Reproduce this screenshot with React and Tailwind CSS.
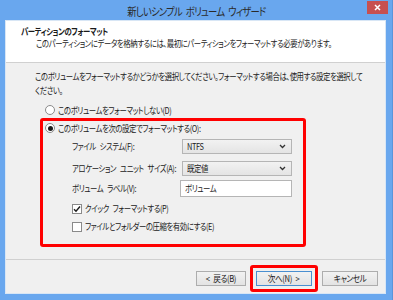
import React from "react";

const F = { fontFamily: '"Noto Sans CJK JP", "Noto Sans", sans-serif' };

function T({ children, className = "" }) {
  return (
    <span className={"inline-block origin-left scale-x-[0.82] whitespace-nowrap " + className}>
      {children}
    </span>
  );
}

function Radio({ checked }) {
  return (
    <span className="w-[10px] h-[10px] rounded-full border border-[#8a8a8a] bg-white flex items-center justify-center shrink-0">
      {checked && <span className="w-[5px] h-[5px] rounded-full bg-[#1a1a1a]" />}
    </span>
  );
}

function Check({ checked }) {
  return (
    <span className="w-[10px] h-[10px] border border-[#8a8a8a] bg-white flex items-center justify-center shrink-0">
      {checked && (
        <svg width="8" height="8" viewBox="0 0 8 8">
          <path d="M1 4.2 L3 6.2 L7 1.5" fill="none" stroke="#1a1a1a" strokeWidth="1.4" />
        </svg>
      )}
    </span>
  );
}

function Select({ value }) {
  return (
    <div className="w-[110px] h-[15px] border border-[#b5b5b5] bg-gradient-to-b from-[#f2f2f2] to-[#e4e4e4] flex items-center justify-between pl-[4px] pr-[5px]">
      <T className="text-[9px] leading-none text-[#1a1a1a]">{value}</T>
      <svg width="7" height="5" viewBox="0 0 7 5">
        <path d="M1 1 L3.5 3.5 L6 1" fill="none" stroke="#333" strokeWidth="1.3" />
      </svg>
    </div>
  );
}

function Btn({ children, def, w = "w-[56px]" }) {
  return (
    <div
      className={
        "h-[15px] " + w + " flex items-center justify-center text-[9px] leading-none text-[#1a1a1a] bg-gradient-to-b from-[#f2f2f2] to-[#e3e3e3] border " +
        (def ? "border-[#4a8fd0]" : "border-[#adadad]")
      }
    >
      <span className="inline-block scale-x-[0.85] whitespace-nowrap">{children}</span>
    </div>
  );
}

export default function App() {
  return (
    <div
      style={F}
      className="w-[393px] h-[300px] bg-[#69a7ee] flex flex-col overflow-hidden [font-feature-settings:'palt'] tracking-[-0.5px] [word-spacing:3px] border-r border-[#5a95da]"
    >
      {/* Title bar */}
      <div className="relative h-[20px] shrink-0 flex items-center justify-center">
        <span className="inline-block scale-x-[0.85] whitespace-nowrap text-[11px] tracking-[-0.9px] text-[#2a2a2a] leading-none pt-[2px]">
          新しいシンプル ボリューム ウィザード
        </span>
        <div className="absolute right-[4px] top-[1px] w-[21px] h-[13px] bg-[#c75050] flex items-center justify-center">
          <svg width="7" height="7" viewBox="0 0 7 7">
            <path d="M1 1 L6 6 M6 1 L1 6" stroke="#fff" strokeWidth="1.5" />
          </svg>
        </div>
      </div>

      {/* Client area */}
      <div className="ml-[5px] mr-[6px] h-[274px] shrink-0 border border-[#d8e6f5] bg-[#f0f0f0] flex flex-col">
        {/* Header */}
        <div className="h-[42px] shrink-0 bg-white border-b border-[#d0d0d0] pl-[15px] pt-[5px] flex flex-col items-start">
          <T className="text-[9px] leading-[12px] font-bold text-[#1a1a1a]">
            パーティションのフォーマット
          </T>
          <T className="text-[9px] leading-[12px] text-[#1a1a1a] ml-[15px]">
            このパーティションにデータを格納するには、最初にパーティションをフォーマットする必要があります。
          </T>
        </div>

        {/* Body */}
        <div className="h-[196px] shrink-0 flex flex-col items-start text-[9px] text-[#1a1a1a]">
          <div className="pl-[29px] pt-[7px] leading-[14px] flex flex-col items-start">
            <T>このボリュームをフォーマットするかどうかを選択してください。フォーマットする場合は、使用する設定を選択して</T>
            <T>ください。</T>
          </div>

          <div className="ml-[39px] mt-[6px] h-[12px] flex items-center gap-[3px] leading-none">
            <Radio />
            <T>このボリュームをフォーマットしない(D)</T>
          </div>

          <div className="ml-[34px] mt-[2px] w-[266px] h-[129px] border-[3px] border-[#ff0000] rounded-[3px] flex flex-col">
            <div className="ml-[2px] mt-[1px] h-[12px] flex items-center gap-[3px] leading-none">
              <Radio checked />
              <T>このボリュームを次の設定でフォーマットする(O):</T>
            </div>

            <div className="mt-[5px] ml-[29px] flex flex-col gap-[7px]">
              <div className="flex items-center">
                <span className="w-[110px] leading-none"><T>ファイル システム(F):</T></span>
                <Select value="NTFS" />
              </div>
              <div className="flex items-center">
                <span className="w-[110px] leading-none"><T>アロケーション ユニット サイズ(A):</T></span>
                <Select value="既定値" />
              </div>
              <div className="flex items-center -mt-[3px]">
                <span className="w-[108px] leading-none"><T>ボリューム ラベル(V):</T></span>
                <div className="w-[112px] h-[17px] border border-[#b5b5b5] bg-white flex items-center pl-[4px] text-[9px] leading-none">
                  <T>ボリューム</T>
                </div>
              </div>
            </div>

            <div className="ml-[29px] mt-[6px] flex flex-col gap-[7px]">
              <div className="h-[11px] flex items-center gap-[3px] leading-none">
                <Check checked />
                <T>クイック フォーマットする(P)</T>
              </div>
              <div className="h-[11px] flex items-center gap-[3px] leading-none">
                <Check />
                <T>ファイルとフォルダーの圧縮を有効にする(E)</T>
              </div>
            </div>
          </div>
        </div>

        {/* Footer */}
        <div className="flex-1 border-t border-[#d0d0d0] flex items-start justify-end pr-[7px] pt-[11px]">
          <div className="flex items-center">
            <Btn w="w-[50px]">&lt; 戻る(B)</Btn>
            <div className="ml-[4px] p-[3px] border-[3px] border-[#ff0000] rounded-[3px] -my-[6px]">
              <Btn def>次へ(N) &gt;</Btn>
            </div>
            <div className="ml-[4px]">
              <Btn>キャンセル</Btn>
            </div>
          </div>
        </div>
      </div>
    </div>
  );
}
